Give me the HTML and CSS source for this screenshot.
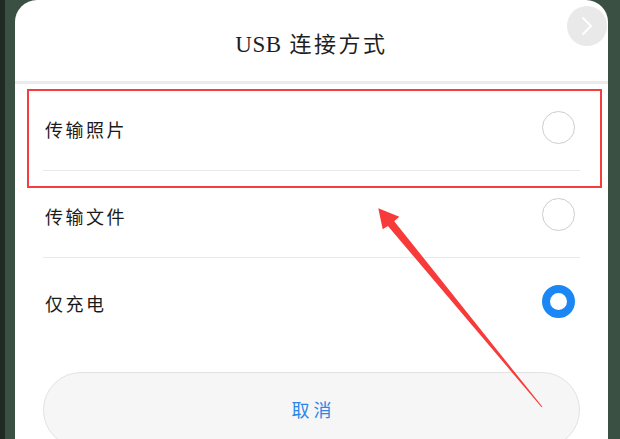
FILE: index.html
```html
<!DOCTYPE html>
<html lang="zh-CN">
<head>
<meta charset="utf-8">
<title>USB 连接方式</title>
<link rel="stylesheet" href="styles.css">
</head>
<body>
<div class="screen">
  <div class="card">
    <div class="title"><span class="title-text"><span class="latin">USB</span> 连接方式</span></div>
    <div class="sep"></div>
    <div class="list">
      <div class="row"><span class="label">传输照片</span><span class="radio"></span></div>
      <div class="row"><span class="label">传输文件</span><span class="radio"></span></div>
      <div class="row last"><span class="label">仅充电</span><span class="radio on"></span></div>
    </div>
    <div class="cancel">取消</div>
  </div>
</div>
<div class="fab">
  <svg width="14" height="20" viewBox="0 0 14 20"><path d="M3 2 L11 10 L3 18" fill="none" stroke="#ffffff" stroke-width="2" stroke-linecap="round" stroke-linejoin="round"/></svg>
</div>
<div class="highlight"></div>
<svg class="arrow" width="620" height="439" viewBox="0 0 620 439">
  <polygon points="378.3,208.3 399.3,216.7 394.2,221.2 542.4,406.8 541.6,407.3 387.9,226.0 382.7,229.3" fill="#f73b3b"/>
</svg>
</body>
</html>
```

FILE: styles.css
```css
html, body {
  margin: 0;
  padding: 0;
}
body {
  width: 620px;
  height: 439px;
  overflow: hidden;
  position: relative;
  background: linear-gradient(to right, #1f2b24 0, #1f2b24 5px, #3a5042 5px, #3a5042 100%);
  font-family: "Noto Sans CJK SC", "Noto Sans", sans-serif;
  color: #222;
}
.screen {
  padding-left: 15px;
  height: 439px;
}
.card {
  width: 593px;
  height: 460px;
  background: #ffffff;
  border-radius: 22px 22px 0 0;
}
.title {
  height: 81px;
  display: flex;
  align-items: center;
  justify-content: center;
  font-size: 22px;
  color: #1e1e1e;
  font-family: "Liberation Serif", "Noto Sans CJK SC", serif;
  font-weight: 400;
}
.title-text {
  letter-spacing: 2.5px;
  padding-top: 2px;
}
.title .latin {
  letter-spacing: 0.5px;
  font-size: 23px;
}
.sep {
  height: 3px;
  background: #ebebeb;
}
.list {
  padding: 0 28px;
}
.row {
  height: 86px;
  display: flex;
  align-items: center;
  justify-content: space-between;
  border-bottom: 1px solid #e9e9e9;
}
.row.last {
  border-bottom: 1px solid transparent;
}
.label {
  font-size: 18px;
  letter-spacing: 2.5px;
  padding-left: 2px;
  padding-top: 3px;
  color: #1a1a1a;
}
.radio {
  width: 31px;
  height: 31px;
  border: 1.5px solid #cdcdcd;
  border-radius: 50%;
  margin-right: 5px;
  box-sizing: content-box;
}
.radio.on {
  width: 17px;
  height: 17px;
  border: 8.5px solid #1a87f5;
}
.cancel {
  margin: 27px 28px 0 28px;
  height: 76px;
  box-sizing: border-box;
  border: 1px solid #e2e2e2;
  background: #f6f6f6;
  border-radius: 38px;
  display: flex;
  align-items: center;
  justify-content: center;
  font-size: 18px;
  letter-spacing: 4px;
  padding-left: 4px;
  padding-bottom: 3px;
  color: #2d87e8;
}
.fab {
  position: absolute;
  left: 567px;
  top: 6px;
  width: 40px;
  height: 40px;
  border-radius: 50%;
  background: rgba(225, 225, 225, 0.75);
  display: flex;
  align-items: center;
  justify-content: center;
}
.highlight {
  position: absolute;
  left: 27px;
  top: 89px;
  width: 575px;
  height: 99px;
  box-sizing: border-box;
  border: 2px solid #f53d3d;
}
.arrow {
  position: absolute;
  left: 0;
  top: 0;
}
```
